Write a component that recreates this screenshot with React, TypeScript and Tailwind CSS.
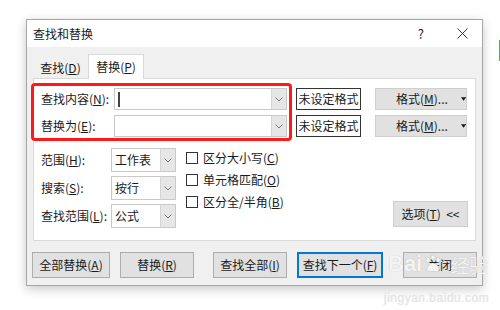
import React from "react";

const font = { fontFamily: '"Noto Sans CJK SC", "Noto Sans", sans-serif' };

function Chevron() {
  return (
    <svg width="8" height="5" viewBox="0 0 8 5" className="block">
      <path d="M0.5 0.5 L4 4 L7.5 0.5" fill="none" stroke="#7a7a7a" strokeWidth="1" />
    </svg>
  );
}

function Combo({ w, h, text, cursor }: { w: string; h: string; text?: string; cursor?: boolean }) {
  return (
    <div className={`${w} ${h} flex border border-[#c9c9c9] bg-white`}>
      <div className="flex-1 flex items-center pl-[3px] text-[12px] text-[#1a1a1a] whitespace-nowrap">
        {cursor && <div className="w-[1.5px] h-[15px] bg-[#444]" />}
        {text}
      </div>
      <div className="w-[15px] flex items-center justify-center bg-[#e6e6e6] border-l border-[#d4d4d4]">
        <Chevron />
      </div>
    </div>
  );
}

function Btn({ children, w, blue }: { children: React.ReactNode; w: string; blue?: boolean }) {
  return (
    <div
      className={`${w} h-[26px] flex items-center justify-center whitespace-nowrap text-[12px] text-[#1a1a1a] bg-[#e1e1e1] ${
        blue ? "border-2 border-[#0078d7]" : "border border-[#adadad]"
      }`}
    >
      {children}
    </div>
  );
}

function Check({ children }: { children: React.ReactNode }) {
  return (
    <div className="h-[22px] flex items-center gap-[5px] text-[12px] text-[#1a1a1a] whitespace-nowrap">
      <div className="w-[12px] h-[12px] border border-[#333] bg-white" />
      <span>{children}</span>
    </div>
  );
}

function FormatBtn() {
  return (
    <div className="ml-[14px] w-[92px] h-[22px] bg-[#e1e1e1] border border-[#cfcfcf] flex items-center pl-[20px] whitespace-nowrap">
      <span>格式(<u>M</u>)...</span>
      <svg width="6" height="4" viewBox="0 0 6 4" className="ml-[13px]">
        <path d="M0 0 L6 0 L3 4 Z" fill="#1a1a1a" />
      </svg>
    </div>
  );
}

export default function App() {
  return (
    <div className="relative w-[500px] h-[310px] bg-white overflow-hidden" style={font}>
      <div className="pt-[19px] pl-[26px]">
        <div className="w-[457px] h-[267px] border border-[#a6a6a6] shadow-[0_3px_10px_rgba(0,0,0,0.22)] flex flex-col bg-[#f0f0f0]">
          {/* title bar */}
          <div className="h-[27px] bg-white flex items-center pl-[6px] pr-[14px] text-[12px] text-[#1a1a1a]">
            <span className="flex-1">查找和替换</span>
            <span className="mr-[33px] text-[13px]">?</span>
            <svg width="11" height="11" viewBox="0 0 11 11">
              <path d="M0.5 0.5 L10.5 10.5 M10.5 0.5 L0.5 10.5" stroke="#333" strokeWidth="1" />
            </svg>
          </div>
          {/* body */}
          <div className="flex-1 px-[6px] flex flex-col">
            {/* tabs */}
            <div className="flex items-end h-[31px] pt-[7px]">
              <div className="w-[55px] h-[20px] flex items-center justify-center text-[12px] text-[#1a1a1a]">
                查找(<u>D</u>)
              </div>
              <div className="w-[56px] h-[25px] -mb-px relative z-10 bg-white border border-[#d9d9d9] border-b-0 flex items-center justify-center text-[12px] text-[#1a1a1a]">
                替换(<u>P</u>)
              </div>
            </div>
            {/* panel */}
            <div className="h-[163px] bg-white border border-[#d9d9d9] pl-[7px] pt-[9px] flex flex-col text-[12px] text-[#1a1a1a]">
              <div className="flex flex-col gap-[5px]">
                <div className="flex items-center">
                  <span className="w-[73px] whitespace-nowrap">查找内容(<u>N</u>):</span>
                  <Combo w="w-[173px]" h="h-[22px]" cursor />
                  <div className="ml-[9px] w-[65px] h-[22px] border border-[#333] flex items-center justify-center whitespace-nowrap">
                    未设定格式
                  </div>
                  <FormatBtn />
                </div>
                <div className="flex items-center">
                  <span className="w-[73px] whitespace-nowrap">替换为(<u>E</u>):</span>
                  <Combo w="w-[173px]" h="h-[22px]" />
                  <div className="ml-[9px] w-[65px] h-[22px] border border-[#333] flex items-center justify-center whitespace-nowrap">
                    未设定格式
                  </div>
                  <FormatBtn />
                </div>
              </div>
              {/* options */}
              <div className="mt-[11px] flex">
                <div className="flex flex-col gap-[4px]">
                  <div className="flex items-center">
                    <span className="w-[70px] whitespace-nowrap">范围(<u>H</u>):</span>
                    <Combo w="w-[65px]" h="h-[24px]" text="工作表" />
                  </div>
                  <div className="flex items-center">
                    <span className="w-[70px] whitespace-nowrap">搜索(<u>S</u>):</span>
                    <Combo w="w-[65px]" h="h-[24px]" text="按行" />
                  </div>
                  <div className="flex items-center">
                    <span className="w-[70px] whitespace-nowrap">查找范围(<u>L</u>):</span>
                    <Combo w="w-[65px]" h="h-[24px]" text="公式" />
                  </div>
                </div>
                <div className="ml-[10px] -mt-[1px] flex flex-col">
                  <Check>区分大小写(<u>C</u>)</Check>
                  <Check>单元格匹配(<u>O</u>)</Check>
                  <Check>区分全/半角(<u>B</u>)</Check>
                </div>
                <div className="flex-1 flex items-end justify-end pr-[7px] pb-[1px]">
                  <div className="w-[75px] h-[26px] bg-[#e1e1e1] border border-[#cfcfcf] flex items-center justify-center whitespace-nowrap">
                    选项(<u>T</u>)&nbsp;&nbsp;&lt;&lt;
                  </div>
                </div>
              </div>
            </div>
            {/* bottom buttons */}
            <div className="mt-[11px] flex items-center">
              <div className="-ml-[1px] flex items-center">
                <Btn w="w-[78px]">全部替换(<u>A</u>)</Btn>
                <div className="ml-[10px]">
                  <Btn w="w-[74px]">替换(<u>R</u>)</Btn>
                </div>
                <div className="ml-[19px]">
                  <Btn w="w-[74px]">查找全部(<u>I</u>)</Btn>
                </div>
                <div className="ml-[10px]">
                  <Btn w="w-[86px]" blue>查找下一个(<u>F</u>)</Btn>
                </div>
                <div className="ml-[20px]">
                  <Btn w="w-[74px]">关闭</Btn>
                </div>
              </div>
            </div>
          </div>
        </div>
      </div>

      {/* red annotation box */}
      <div className="absolute left-[31px] top-[83px] w-[261px] h-[58px] border-[3px] border-[#ff1a1a] rounded-[4px]" />

      {/* green edge mark */}
      <div className="absolute right-0 top-[40px] w-[1px] h-[21px] bg-[#4caf50]" />

      {/* watermark */}
      <div className="absolute left-[388px] top-[253px] flex items-center text-[#f4f4f4] [text-shadow:0_0_1px_rgba(0,0,0,0.2)]" style={{ fontFamily: '"Liberation Sans", sans-serif' }}>
        <span className="text-[22px] font-bold leading-none">Bai</span>
        <svg width="20" height="20" viewBox="0 0 20 20" className="mx-[1px]">
          <g fill="#f4f4f4" stroke="rgba(0,0,0,0.15)" strokeWidth="0.6">
            <ellipse cx="5" cy="6" rx="2" ry="2.6" />
            <ellipse cx="10" cy="3.5" rx="2" ry="2.6" />
            <ellipse cx="15" cy="6" rx="2" ry="2.6" />
            <path d="M4 16 C4 11 8 9 10 9 C12 9 16 11 16 16 C16 18 13 18 10 17 C7 18 4 18 4 16 Z" />
          </g>
        </svg>
        <span className="ml-[6px] text-[19px] leading-none" style={font}>经验</span>
      </div>
      <div className="absolute left-[384px] top-[289px] text-[12px] text-[#e6e6e6] [text-shadow:0_0_1px_rgba(0,0,0,0.12)] tracking-[0.5px]" style={{ fontFamily: '"Liberation Sans", sans-serif' }}>
        jingyan.baidu.com
      </div>
    </div>
  );
}
